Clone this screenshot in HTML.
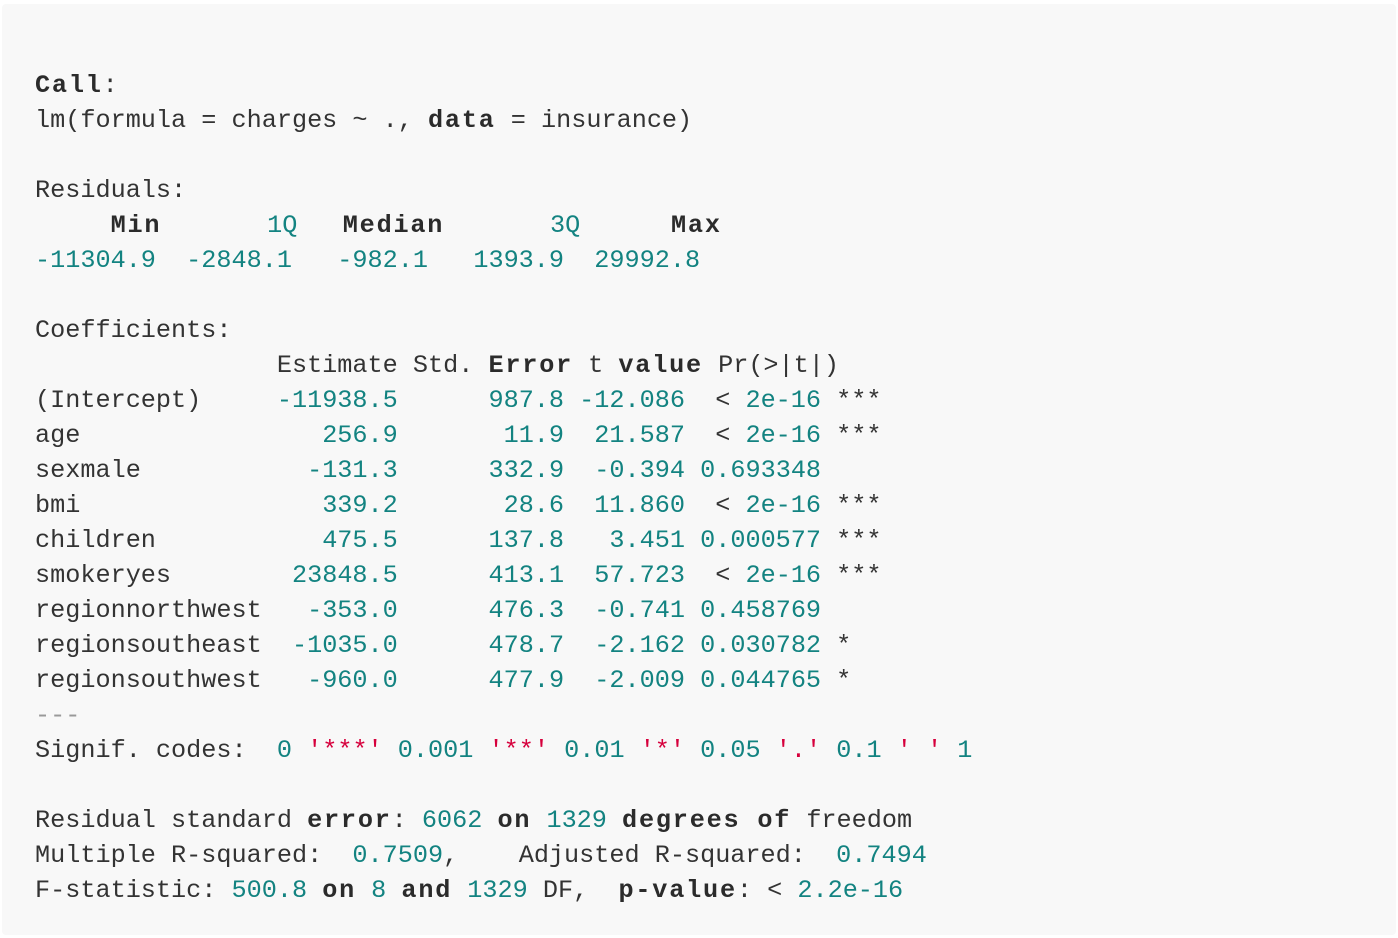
<!DOCTYPE html>
<html><head><meta charset="utf-8"><style>
html,body{margin:0;padding:0;background:#fff;width:1398px;height:938px;overflow:hidden}
.card{position:absolute;left:2px;top:4px;width:1394px;height:931px;background:#f8f8f8;border-radius:4px}
pre{position:absolute;left:35px;top:68px;margin:0;font-family:"Liberation Mono",monospace;font-size:25.2px;line-height:35px;color:#333}
b{font-weight:bold;color:#2b2b2b;letter-spacing:1.8px}
.n{color:#138381}
.r{color:#d6003c}
.g{color:#999}
</style></head><body><div class="card"></div>
<pre><b>Call</b>:
lm(formula = charges ~ ., <b>data</b> = insurance)

Residuals:
     <b>Min</b>       <span class="n">1Q</span>   <b>Median</b>       <span class="n">3Q</span>      <b>Max</b> 
<span class="n">-11304.9  -2848.1   -982.1   1393.9  29992.8</span> 

Coefficients:
                Estimate Std. <b>Error</b> t <b>value</b> Pr(&gt;|t|)    
(Intercept)     <span class="n">-11938.5</span>      <span class="n">987.8</span> <span class="n">-12.086</span>  &lt; <span class="n">2e-16</span> ***
age                <span class="n">256.9</span>       <span class="n">11.9</span>  <span class="n">21.587</span>  &lt; <span class="n">2e-16</span> ***
sexmale           <span class="n">-131.3</span>      <span class="n">332.9</span>  <span class="n">-0.394</span> <span class="n">0.693348</span>    
bmi                <span class="n">339.2</span>       <span class="n">28.6</span>  <span class="n">11.860</span>  &lt; <span class="n">2e-16</span> ***
children           <span class="n">475.5</span>      <span class="n">137.8</span>   <span class="n">3.451</span> <span class="n">0.000577</span> ***
smokeryes        <span class="n">23848.5</span>      <span class="n">413.1</span>  <span class="n">57.723</span>  &lt; <span class="n">2e-16</span> ***
regionnorthwest   <span class="n">-353.0</span>      <span class="n">476.3</span>  <span class="n">-0.741</span> <span class="n">0.458769</span>    
regionsoutheast  <span class="n">-1035.0</span>      <span class="n">478.7</span>  <span class="n">-2.162</span> <span class="n">0.030782</span> *  
regionsouthwest   <span class="n">-960.0</span>      <span class="n">477.9</span>  <span class="n">-2.009</span> <span class="n">0.044765</span> *  
<span class="g">---</span>
Signif. codes:  <span class="n">0</span> <span class="r">'***'</span> <span class="n">0.001</span> <span class="r">'**'</span> <span class="n">0.01</span> <span class="r">'*'</span> <span class="n">0.05</span> <span class="r">'.'</span> <span class="n">0.1</span> <span class="r">' '</span> <span class="n">1</span>

Residual standard <b>error</b>: <span class="n">6062</span> <b>on</b> <span class="n">1329</span> <b>degrees of</b> freedom
Multiple R-squared:  <span class="n">0.7509</span>,    Adjusted R-squared:  <span class="n">0.7494</span> 
F-statistic: <span class="n">500.8</span> <b>on</b> <span class="n">8</span> <b>and</b> <span class="n">1329</span> DF,  <b>p-value</b>: &lt; <span class="n">2.2e-16</span></pre>
</body></html>
